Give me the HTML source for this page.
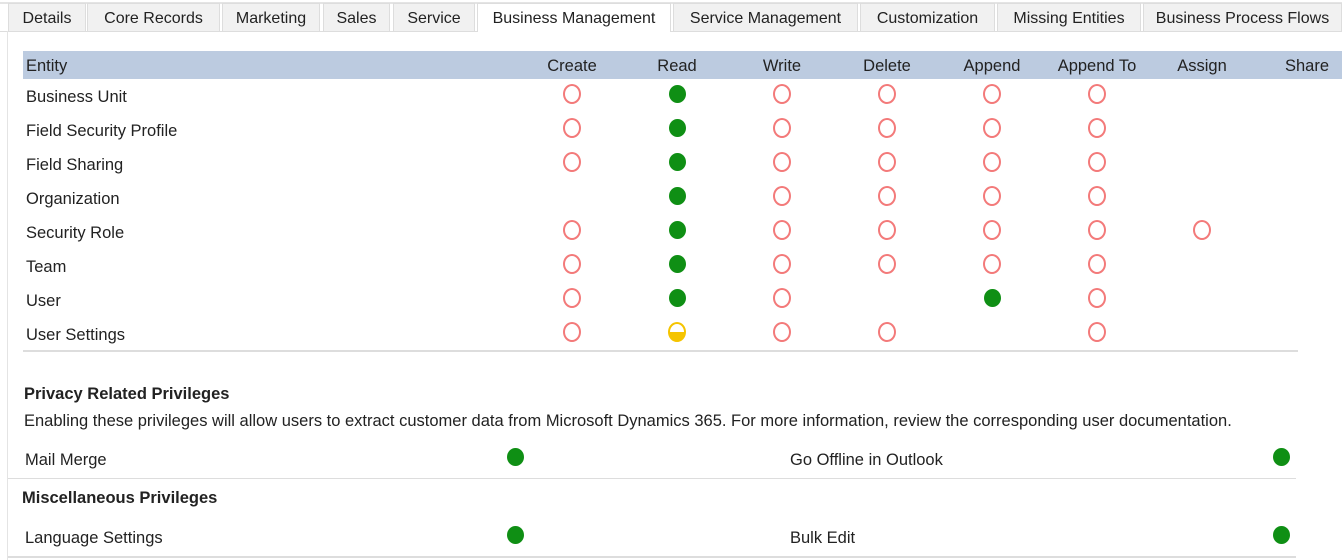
<!DOCTYPE html>
<html><head><style>
body{margin:0;width:1342px;height:560px;background:#fff;font-family:"Liberation Sans",sans-serif;font-size:16.5px;color:#222;position:relative;overflow:hidden}
.a{position:absolute;white-space:nowrap}
.tab{position:absolute;top:3px;height:28px;background:#f1f1f1;border:1px solid #ddd;border-bottom:none;box-sizing:border-box;text-align:center;line-height:30px;font-size:16px}
.tab.act{background:#fff;height:29px}
.o{position:absolute;width:18px;height:20px;border:2px solid #f37a7a;border-radius:50%;box-sizing:border-box}
.g{position:absolute;width:17px;height:18px;background:#0f8f14;border-radius:50%}
.h{position:absolute;top:57px;transform:translateX(-50%)}
</style></head><body>
<div class="a" style="left:0;top:2px;width:1342px;height:2px;background:#e4e4e4"></div>
<div class="tab" style="left:8px;width:78px">Details</div>
<div class="tab" style="left:87px;width:133px">Core Records</div>
<div class="tab" style="left:222px;width:98px">Marketing</div>
<div class="tab" style="left:323px;width:67px">Sales</div>
<div class="tab" style="left:393px;width:82px">Service</div>
<div class="tab act" style="left:477px;width:194px">Business Management</div>
<div class="tab" style="left:673px;width:185px">Service Management</div>
<div class="tab" style="left:860px;width:135px">Customization</div>
<div class="tab" style="left:997px;width:144px">Missing Entities</div>
<div class="tab" style="left:1143px;width:199px">Business Process Flows</div>
<div class="a" style="left:0;top:31px;width:477px;height:1px;background:#ddd"></div>
<div class="a" style="left:671px;top:31px;width:671px;height:1px;background:#ddd"></div>
<div class="a" style="left:7px;top:31px;width:1px;height:529px;background:#e4e4e4"></div>
<div class="a" style="left:23px;top:51px;width:1319px;height:28px;background:#bccbe0"></div>
<div class="a" style="left:26px;top:57px">Entity</div>
<div class="h" style="left:572px">Create</div>
<div class="h" style="left:677px">Read</div>
<div class="h" style="left:782px">Write</div>
<div class="h" style="left:887px">Delete</div>
<div class="h" style="left:992px">Append</div>
<div class="h" style="left:1097px">Append To</div>
<div class="h" style="left:1202px">Assign</div>
<div class="h" style="left:1307px">Share</div>
<div id="rows"></div>
<div class="a" style="left:23px;top:350px;width:1275px;height:2px;background:#ddd"></div>
<div class="a" style="left:24px;top:385px;font-weight:bold">Privacy Related Privileges</div>
<div class="a" style="left:24px;top:412px">Enabling these privileges will allow users to extract customer data from Microsoft Dynamics 365. For more information, review the corresponding user documentation.</div>
<div class="a" style="left:25px;top:451px">Mail Merge</div>
<div class="g" style="left:507px;top:448px"></div>
<div class="a" style="left:790px;top:451px">Go Offline in Outlook</div>
<div class="g" style="left:1273px;top:448px"></div>
<div class="a" style="left:8px;top:478px;width:1288px;height:1px;background:#ddd"></div>
<div class="a" style="left:22px;top:489px;font-weight:bold">Miscellaneous Privileges</div>
<div class="a" style="left:25px;top:529px">Language Settings</div>
<div class="g" style="left:507px;top:526px"></div>
<div class="a" style="left:790px;top:529px">Bulk Edit</div>
<div class="g" style="left:1273px;top:526px"></div>
<div class="a" style="left:8px;top:556px;width:1288px;height:2px;background:#ddd"></div>
<script>
var rows2=[["Business Unit","ogoooo"],["Field Security Profile","ogoooo"],["Field Sharing","ogoooo"],["Organization","-goooo"],["Security Role","ogooooo"],["Team","ogoooo"],["User","ogo-go"],["User Settings","oyoo-o"]];
var cx=[572,677,782,887,992,1097,1202],h="";
rows2.forEach(function(r,i){var cy=94+34*i;h+='<div class="a" style="left:26px;top:'+(cy-6)+'px">'+r[0]+'</div>';
for(var j=0;j<r[1].length;j++){var c=r[1][j];
if(c=="o")h+='<div class="o" style="left:'+(cx[j]-9)+'px;top:'+(cy-10)+'px"></div>';
if(c=="g")h+='<div class="g" style="left:'+(cx[j]-8.5)+'px;top:'+(cy-9)+'px"></div>';
if(c=="y")h+='<div class="a" style="left:'+(cx[j]-9)+'px;top:'+(cy-10)+'px;width:18px;height:20px;border-radius:50%;box-sizing:border-box;border:2px solid #f5c400;background:linear-gradient(#fff 50%,#f5c400 50%)"></div>';}});
document.getElementById("rows").innerHTML=h;
</script>
</body></html>
